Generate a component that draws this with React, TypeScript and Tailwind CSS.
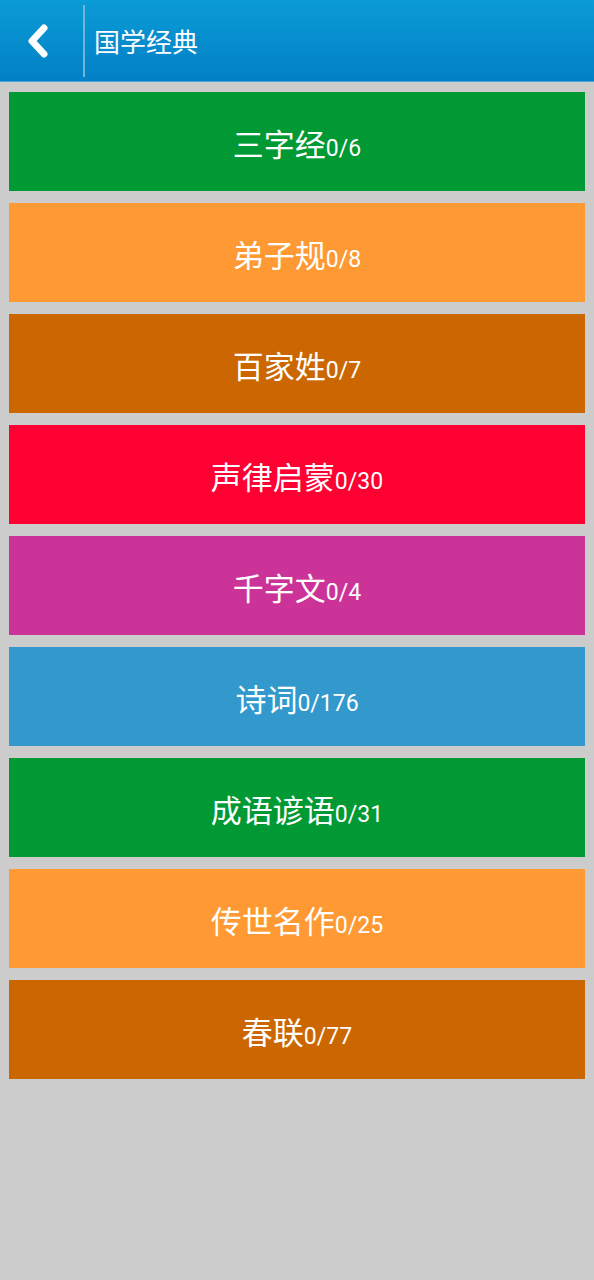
import React from "react";

const items: { name: string; count: string; bg: string }[] = [
  { name: "三字经", count: "0/6", bg: "bg-[#009933]" },
  { name: "弟子规", count: "0/8", bg: "bg-[#ff9933]" },
  { name: "百家姓", count: "0/7", bg: "bg-[#cc6600]" },
  { name: "声律启蒙", count: "0/30", bg: "bg-[#ff0033]" },
  { name: "千字文", count: "0/4", bg: "bg-[#cc3399]" },
  { name: "诗词", count: "0/176", bg: "bg-[#3399cc]" },
  { name: "成语谚语", count: "0/31", bg: "bg-[#009933]" },
  { name: "传世名作", count: "0/25", bg: "bg-[#ff9933]" },
  { name: "春联", count: "0/77", bg: "bg-[#cc6600]" },
];

export default function App() {
  return (
    <div
      className="w-[594px] min-h-[1280px] bg-[#cccccc]"
      style={{ fontFamily: '"Noto Sans CJK SC", Roboto, sans-serif' }}
    >
      <header className="h-[82px] flex items-center bg-gradient-to-b from-[#0b9bd6] to-[#0380c6] border-b border-[#4aa6dc]">
        <div className="w-[83px] h-full flex items-center justify-center">
          <svg width="28" height="36" viewBox="0 0 28 36" className="ml-[-8px]">
            <path
              d="M20 5 L8 18 L20 31"
              fill="none"
              stroke="#ffffff"
              strokeWidth="7"
              strokeLinecap="round"
              strokeLinejoin="round"
            />
          </svg>
        </div>
        <div className="w-[2px] h-[72px] bg-[#6fb4d9]" />
        <h1 className="ml-[9px] text-[26px] leading-none text-white">国学经典</h1>
      </header>
      <main className="flex flex-col gap-[12px] px-[9px] pt-[10px]">
        {items.map((it) => (
          <div
            key={it.name}
            className={`${it.bg} h-[99px] flex items-center justify-center text-white`}
          >
            <span className="pt-[4px] flex items-baseline">
              <span className="text-[31px]">{it.name}</span>
              <span className="text-[23px]" style={{ fontFamily: "Roboto, sans-serif" }}>
                {it.count}
              </span>
            </span>
          </div>
        ))}
      </main>
    </div>
  );
}
